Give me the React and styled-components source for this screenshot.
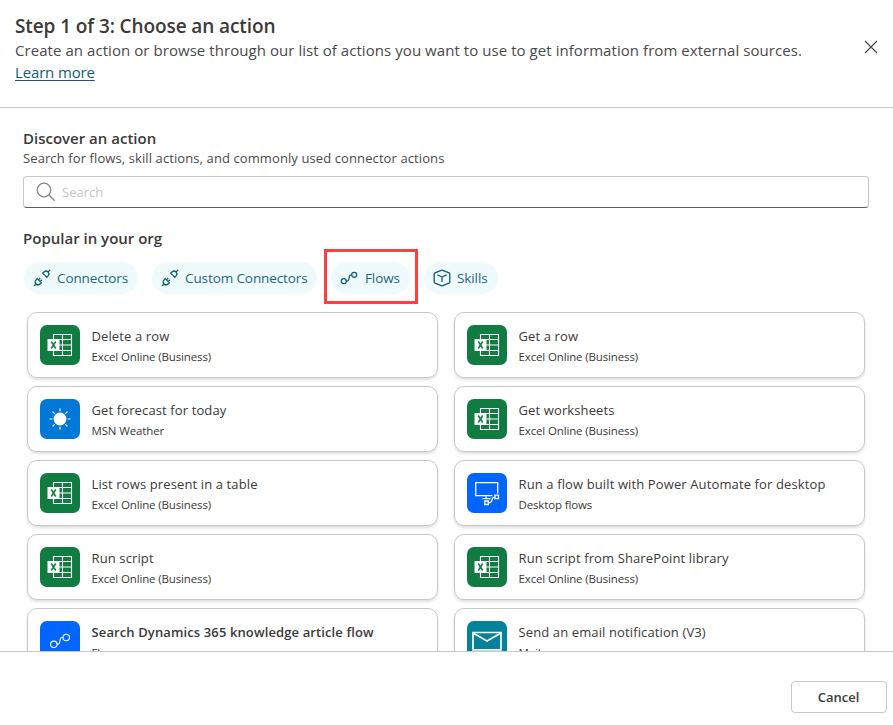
import React from 'react';
import styled, { createGlobalStyle } from 'styled-components';

const GlobalStyle = createGlobalStyle`
  * { box-sizing: border-box; }
  body {
    margin: 0;
    background: #fff;
    color: #3b3a39;
    font-family: 'Open Sans', 'Noto Sans', sans-serif;
    overflow: hidden;
  }
`;

const Dialog = styled.main`
  display: flex;
  flex-direction: column;
  width: 893px;
  height: 725px;
  background: #fff;
`;

const Header = styled.header`
  display: flex;
  justify-content: space-between;
  height: 108px;
  padding: 14px 15px 0 15px;
  border-bottom: 1px solid #c8c8c8;
`;

const Title = styled.h1`
  margin: 0;
  font-size: 19px;
  font-weight: 600;
  line-height: 25px;
  letter-spacing: -0.1px;
  white-space: nowrap;
`;

const Description = styled.p`
  margin: 0;
  font-size: 15px;
  line-height: 22px;
  letter-spacing: 0.06px;
  color: #4a4a4a;
  white-space: nowrap;
`;

const LearnMore = styled.a`
  color: #115e74;
  letter-spacing: -0.15px;
  text-decoration: underline;
  text-underline-offset: 2px;
`;

const CloseButton = styled.button`
  display: flex;
  align-self: flex-start;
  margin-top: 26px;
  padding: 0;
  border: 0;
  background: none;
`;

const Body = styled.section`
  flex: none;
  height: 543px;
  padding: 20px 24px 0 23px;
  overflow: hidden;
`;

const SectionTitle = styled.h2`
  margin: 0;
  font-size: 15px;
  font-weight: 600;
  line-height: 20px;
  white-space: nowrap;
`;

const Hint = styled.p`
  margin: 0;
  font-size: 13px;
  line-height: 20px;
  letter-spacing: 0.1px;
  color: #4a4a4a;
  white-space: nowrap;
`;

const SearchBox = styled.label`
  display: flex;
  align-items: center;
  gap: 6px;
  height: 32px;
  margin: 8px 0 20px;
  padding: 0 12px;
  border: 1px solid #c8c8c8;
  border-bottom-color: #5c5c5c;
  border-radius: 4px;
`;

const SearchInput = styled.input`
  flex: 1;
  padding: 0;
  border: 0;
  outline: 0;
  font: 13px/20px 'Open Sans', 'Noto Sans', sans-serif;
  &::placeholder { color: #c8c6c4; opacity: 1; }
`;

const Chips = styled.nav`
  display: flex;
  gap: 14px;
  margin: 14px 0 18px 1px;
`;

const Chip = styled.button`
  position: relative;
  display: flex;
  align-items: center;
  gap: ${({ $gap }) => $gap}px;
  width: ${({ $width }) => $width}px;
  height: 32px;
  padding: 0 0 0 9px;
  border: 0;
  border-radius: 16px;
  background: #effafd;
  color: #1c667b;
  font: 13.5px/20px 'Open Sans', 'Noto Sans', sans-serif;
  letter-spacing: -0.1px;
  white-space: nowrap;
`;

const Highlight = styled.span`
  position: absolute;
  inset: -13px -8px -10px -7px;
  border: 3px solid #f94144;
`;

const CardGrid = styled.div`
  display: grid;
  grid-template-columns: 411px 411px;
  grid-auto-rows: 66px;
  gap: 8px 16px;
  margin-left: 4px;
`;

const Card = styled.article`
  display: flex;
  gap: 12px;
  padding: 12px;
  border: 1px solid #c8c8c8;
  border-radius: 10px;
  box-shadow: 0 2px 3px rgba(0, 0, 0, 0.13);
`;

const Tile = styled.span`
  display: flex;
  flex: none;
  width: 40px;
  height: 40px;
  border-radius: 7px;
  overflow: hidden;
  background: ${({ $color }) => $color};
`;

const CardText = styled.div`
  margin-left: -0.5px;
`;

const CardTitle = styled.h3`
  margin: 1px 0 0;
  font-size: 13px;
  font-weight: ${({ $strong }) => ($strong ? 600 : 400)};
  line-height: 20px;
  letter-spacing: 0.12px;
  white-space: nowrap;
`;

const CardSource = styled.p`
  margin: 2px 0 0;
  font-size: 11.5px;
  line-height: 17px;
  letter-spacing: -0.14px;
  white-space: nowrap;
`;

const Footer = styled.footer`
  display: flex;
  flex: 1;
  align-items: flex-start;
  justify-content: flex-end;
  padding: 29px 6px 0 0;
  border-top: 1px solid #c8c8c8;
`;

const CancelButton = styled.button`
  width: 96px;
  height: 32px;
  padding: 0 1px 0 0;
  border: 1px solid #c8c8c8;
  border-radius: 4px;
  background: #fff;
  color: #3b3a39;
  font: 600 13px/20px 'Open Sans', 'Noto Sans', sans-serif;
`;

const CloseIcon = () => (
  <svg width="14" height="14" viewBox="0 0 14 14" fill="none" stroke="#484848" strokeWidth="1.2">
    <path d="M1 1 13 13M13 1 1 13" />
  </svg>
);

const SearchIcon = () => (
  <svg width="20" height="20" viewBox="0 0 20 20" fill="none" stroke="#8a8886" strokeWidth="1.3">
    <circle cx="8" cy="8" r="6.8" />
    <path d="m13 13 5.7 5.7" />
  </svg>
);

const PlugIcon = () => (
  <svg width="18" height="18" viewBox="0 0 18 18" fill="none" stroke="#115e74" strokeWidth="1.3">
    <path d="M.9 17.1 3 15M3.6 9.1l5.3 5.3M4.3 9.8 3 11.1a2.75 2.75 0 0 0 3.9 3.9l1.3-1.3M5.4 10.9l1.9-1.9M7.1 12.6l1.9-1.9" />
    <path d="M17.1.9 15 3M9.1 3.6l5.3 5.3M9.8 4.3l1.3-1.3a2.75 2.75 0 0 1 3.9 3.9l-1.3 1.3" />
  </svg>
);

const FlowIcon = () => (
  <svg width="18" height="18" viewBox="0 0 18 18" fill="none" stroke="#115e74" strokeWidth="1.3">
    <circle cx="3.8" cy="12.2" r="2.5" />
    <circle cx="14.2" cy="5.8" r="2.5" />
    <path d="M6.3 12.2h.5c1.2 0 1.8-.6 2-1.7l.5-2.9c.2-1.2.8-1.8 2-1.8h.4" />
  </svg>
);

const CubeIcon = () => (
  <svg width="18" height="18" viewBox="0 0 18 18" fill="none" stroke="#115e74" strokeWidth="1.3" strokeLinejoin="round">
    <path d="M8.3 1.3q.7-.3 1.4 0L16 3.9q.8.4.8 1.2v7.8q0 .8-.8 1.2l-6.3 2.6q-.7.3-1.4 0L2 14.1q-.8-.4-.8-1.2V5.1q0-.8.8-1.2Z" />
    <path d="M4.4 5.9 9 8 13.6 5.9M9 8V13" />
  </svg>
);

const ExcelIcon = () => (
  <svg width="40" height="40" viewBox="0 0 40 40" fill="none" stroke="#fff">
    <path d="M13.5 9.5h18v21h-18zM22.5 9.5v21M13.5 14.5h18M13.5 20h18M13.5 25.5h18" strokeWidth="1.1" />
    <path d="M7.5 14h12v12h-12z" fill="#fff" stroke="none" />
    <path d="m11.3 16.5 4.4 7M15.7 16.5l-4.4 7" stroke="#107c41" strokeWidth="1.5" />
  </svg>
);

const SunIcon = () => (
  <svg width="40" height="40" viewBox="0 0 40 40" stroke="#fff" strokeWidth="1.2">
    <circle cx="20" cy="20" r="6.4" fill="#fff" stroke="none" />
    <path d="M20 9.5v2.8M20 27.7v2.8M9.5 20h2.8M27.7 20h2.8M12.6 12.6l2 2M25.4 25.4l2 2M27.4 12.6l-2 2M14.6 25.4l-2 2" />
  </svg>
);

const DesktopIcon = () => (
  <svg width="40" height="40" viewBox="0 0 40 40" fill="none" stroke="#fff" strokeWidth="1.3">
    <path d="M25.5 22.7H8.7V9.6h22v11M19 23v2.5M15.5 25.6h8" />
    <path d="M17.8 28h3.5v3.5h-3.5zM28 22.2h3.5v3.5H28zM21.5 29.6h1.2c1.2 0 1.5-.6 1.9-1.6l.8-2.2c.4-1 .9-1.7 2.3-1.7" />
  </svg>
);

const MailIcon = () => (
  <svg width="40" height="40" viewBox="0 0 40 40" fill="none" stroke="#fff" strokeWidth="1.7">
    <path d="M6 11.5h28v17.3H6zM6 12l14 8L34 12" />
  </svg>
);

const FlowTileIcon = () => (
  <svg width="40" height="40" viewBox="0 0 40 40" fill="none" stroke="#fff" strokeWidth="1.1">
    <circle cx="13.8" cy="23.3" r="3.2" />
    <circle cx="26.2" cy="16.5" r="3.2" />
    <path d="M17 23.3h.5c1.4 0 1.9-.8 2.1-1.9l.6-3c.2-1.2.9-1.9 2.2-1.9h.6" />
  </svg>
);

const TILES = {
  excel: { color: '#107c41', Icon: ExcelIcon },
  weather: { color: '#0078d7', Icon: SunIcon },
  desktop: { color: '#0066ff', Icon: DesktopIcon },
  flow: { color: '#0066ff', Icon: FlowTileIcon },
  mail: { color: '#038299', Icon: MailIcon },
};

const EXCEL = 'Excel Online (Business)';

const ACTIONS = [
  { title: 'Delete a row', source: EXCEL, tile: 'excel' },
  { title: 'Get a row', source: EXCEL, tile: 'excel' },
  { title: 'Get forecast for today', source: 'MSN Weather', tile: 'weather' },
  { title: 'Get worksheets', source: EXCEL, tile: 'excel' },
  { title: 'List rows present in a table', source: EXCEL, tile: 'excel' },
  { title: 'Run a flow built with Power Automate for desktop', source: 'Desktop flows', tile: 'desktop' },
  { title: 'Run script', source: EXCEL, tile: 'excel' },
  { title: 'Run script from SharePoint library', source: EXCEL, tile: 'excel' },
  { title: 'Search Dynamics 365 knowledge article flow', source: 'Flow', tile: 'flow', strong: true },
  { title: 'Send an email notification (V3)', source: 'Mail', tile: 'mail' },
];

const CHIPS = [
  { label: 'Connectors', Icon: PlugIcon, width: 114, gap: 6 },
  { label: 'Custom Connectors', Icon: PlugIcon, width: 165, gap: 6 },
  { label: 'Flows', Icon: FlowIcon, width: 79, gap: 7, highlighted: true },
  { label: 'Skills', Icon: CubeIcon, width: 74, gap: 6 },
];

export default function App() {
  return (
    <>
      <GlobalStyle />
      <Dialog>
        <Header>
          <div>
            <Title>Step 1 of 3: Choose an action</Title>
            <Description>
              Create an action or browse through our list of actions you want to use to get information from external sources.
            </Description>
            <Description>
              <LearnMore>Learn more</LearnMore>
            </Description>
          </div>
          <CloseButton aria-label="Close"><CloseIcon /></CloseButton>
        </Header>
        <Body>
          <SectionTitle>Discover an action</SectionTitle>
          <Hint>Search for flows, skill actions, and commonly used connector actions</Hint>
          <SearchBox>
            <SearchIcon />
            <SearchInput placeholder="Search" />
          </SearchBox>
          <SectionTitle>Popular in your org</SectionTitle>
          <Chips>
            {CHIPS.map(({ label, Icon, width, gap, highlighted }) => (
              <Chip key={label} $width={width} $gap={gap}>
                <Icon />
                {label}
                {highlighted && <Highlight />}
              </Chip>
            ))}
          </Chips>
          <CardGrid>
            {ACTIONS.map(({ title, source, tile, strong }) => {
              const { color, Icon } = TILES[tile];
              return (
                <Card key={title}>
                  <Tile $color={color}><Icon /></Tile>
                  <CardText>
                    <CardTitle $strong={strong}>{title}</CardTitle>
                    <CardSource>{source}</CardSource>
                  </CardText>
                </Card>
              );
            })}
          </CardGrid>
        </Body>
        <Footer>
          <CancelButton>Cancel</CancelButton>
        </Footer>
      </Dialog>
    </>
  );
}
